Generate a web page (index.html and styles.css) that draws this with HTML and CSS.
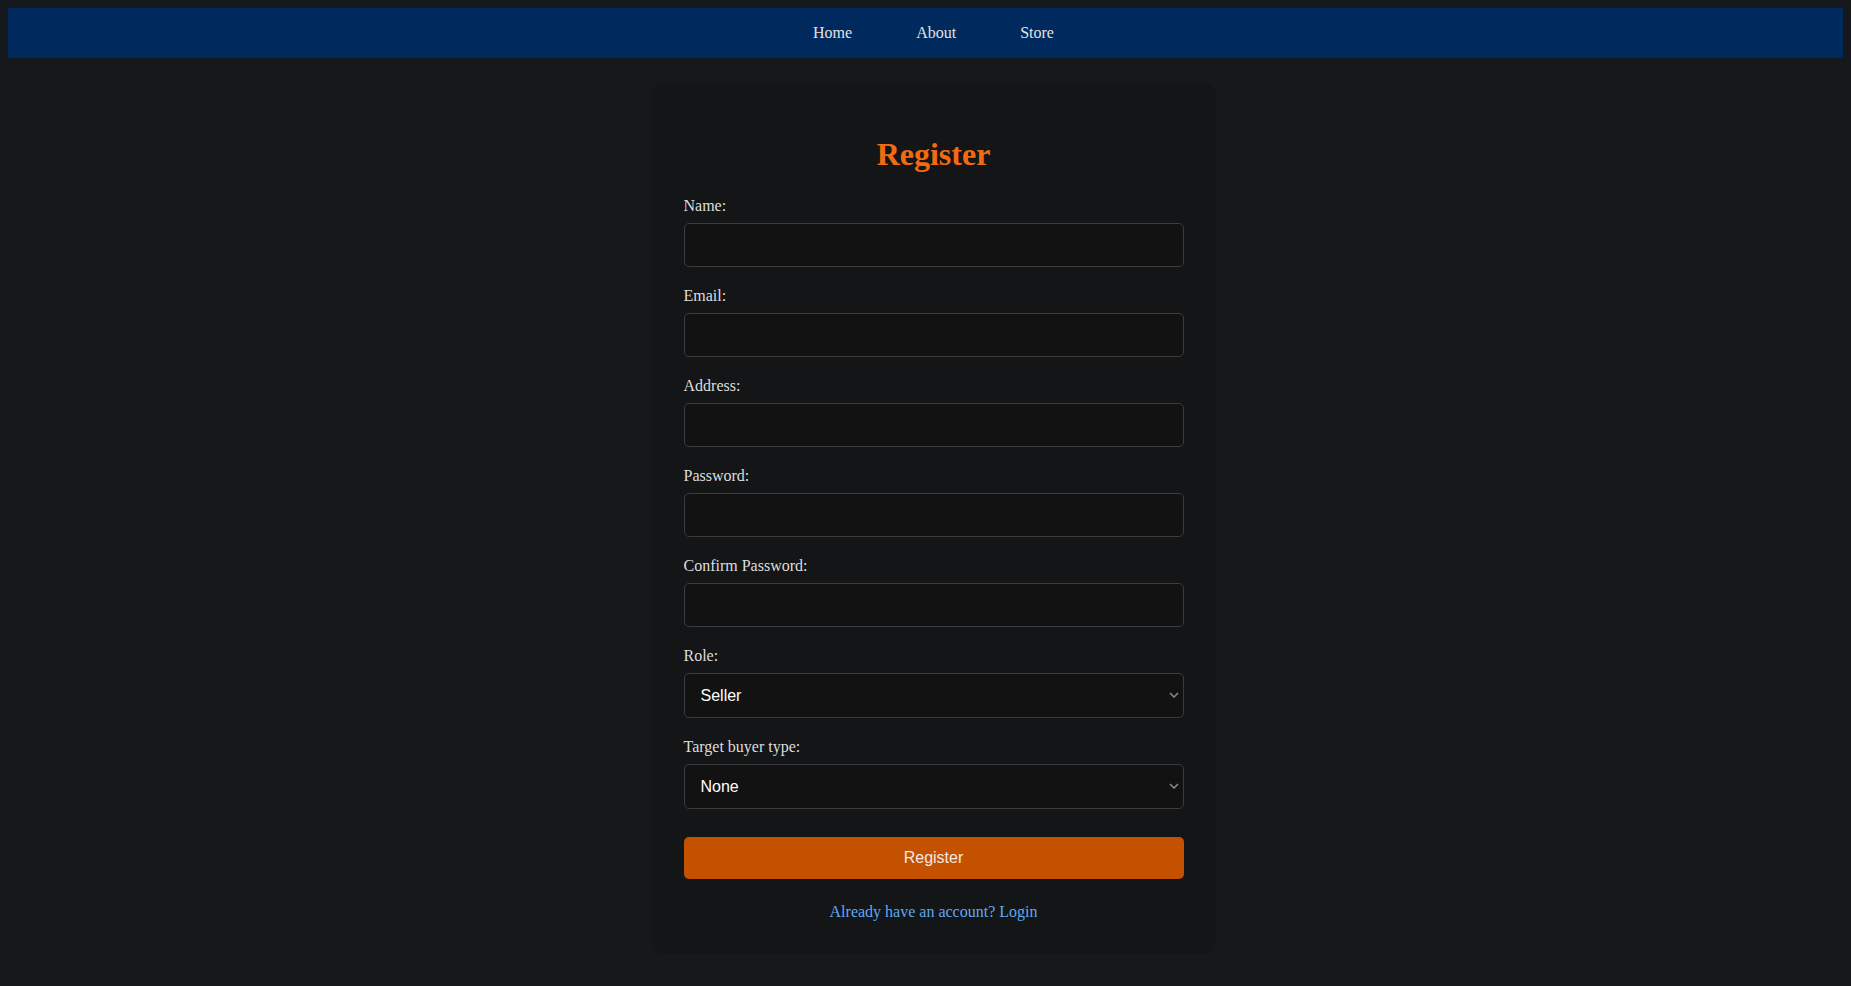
FILE: index.html
```html
<!DOCTYPE html>
<html lang="en">
<head>
<meta charset="utf-8">
<title>Register</title>
<link rel="stylesheet" href="styles.css">
</head>
<body>
<nav class="navbar">
  <ul class="nav-links">
    <li><a href="#">Home</a></li>
    <li><a href="#">About</a></li>
    <li><a href="#">Store</a></li>
  </ul>
</nav>
<div class="page">
  <div class="card">
    <h1 class="title">Register</h1>
    <form class="form">
      <div class="form-group">
        <label class="label">Name:</label>
        <input class="input" type="text">
      </div>
      <div class="form-group">
        <label class="label">Email:</label>
        <input class="input" type="email">
      </div>
      <div class="form-group">
        <label class="label">Address:</label>
        <input class="input" type="text">
      </div>
      <div class="form-group">
        <label class="label">Password:</label>
        <input class="input" type="password">
      </div>
      <div class="form-group">
        <label class="label">Confirm Password:</label>
        <input class="input" type="password">
      </div>
      <div class="form-group">
        <label class="label">Role:</label>
        <div class="select-wrap">
          <select class="select"><option>Seller</option><option>Buyer</option></select>
          <svg class="chevron" width="10" height="6" viewBox="0 0 10 6"><path d="M1 1l4 4 4-4" fill="none" stroke="#8a8a8a" stroke-width="1.5"/></svg>
        </div>
      </div>
      <div class="form-group">
        <label class="label">Target buyer type:</label>
        <div class="select-wrap">
          <select class="select"><option>None</option></select>
          <svg class="chevron" width="10" height="6" viewBox="0 0 10 6"><path d="M1 1l4 4 4-4" fill="none" stroke="#8a8a8a" stroke-width="1.5"/></svg>
        </div>
      </div>
      <button class="btn" type="button">Register</button>
    </form>
    <p class="login-link"><a href="#">Already have an account? Login</a></p>
  </div>
</div>
</body>
</html>
```

FILE: styles.css
```css
html {
  overflow-x: hidden;
}

body {
  margin: 8px;
  background: #16191b;
  color: #dddddd;
  font-family: "Liberation Serif", "Times New Roman", serif;
  font-size: 16px;
  overflow-x: hidden;
}

.navbar {
  width: 100vw;
  height: 50px;
  background: #002a5d;
  display: flex;
  align-items: center;
  justify-content: center;
}

.nav-links {
  list-style: none;
  margin: 0;
  padding: 0;
  display: flex;
  gap: 64px;
}

.nav-links a {
  color: #e2e2e2;
  text-decoration: none;
}

.page {
  width: 100vw;
  display: flex;
  justify-content: center;
  padding-top: 26px;
}

.card {
  width: 500px;
  padding: 32px 32px 33px;
  background: #131517;
  border-radius: 12px;
}

.title {
  text-align: center;
  color: #f26b12;
  font-size: 32px;
  margin: 20px 0 24px;
}

.form {
  display: flex;
  flex-direction: column;
}

.form-group {
  display: flex;
  flex-direction: column;
  margin-bottom: 20px;
}

.label {
  display: block;
  margin-bottom: 8px;
  color: #dedede;
}

.input {
  box-sizing: border-box;
  width: 100%;
  height: 44px;
  padding: 0 12px;
  background: #121212;
  border: 1px solid #3b3b3b;
  border-radius: 5px;
  color: #ffffff;
  font-family: "Liberation Sans", Arial, sans-serif;
  font-size: 16px;
  outline: none;
}

.select-wrap {
  position: relative;
}

.select {
  box-sizing: border-box;
  width: 100%;
  height: 45px;
  padding: 0 16px;
  background: #121212;
  border: 1px solid #3b3b3b;
  border-radius: 5px;
  color: #ffffff;
  font-family: "Liberation Sans", Arial, sans-serif;
  font-size: 16px;
  appearance: none;
  -webkit-appearance: none;
  outline: none;
}

.chevron {
  position: absolute;
  right: 5px;
  top: 19px;
  pointer-events: none;
}

.btn {
  margin-top: 8px;
  height: 42px;
  width: 100%;
  background: #c45100;
  border: none;
  border-radius: 5px;
  color: #f3e9e1;
  font-family: "Liberation Sans", Arial, sans-serif;
  font-size: 16px;
  cursor: pointer;
}

.login-link {
  margin: 24px 0 0;
  text-align: center;
}

.login-link a {
  color: #5fa9f3;
  text-decoration: none;
}
```
